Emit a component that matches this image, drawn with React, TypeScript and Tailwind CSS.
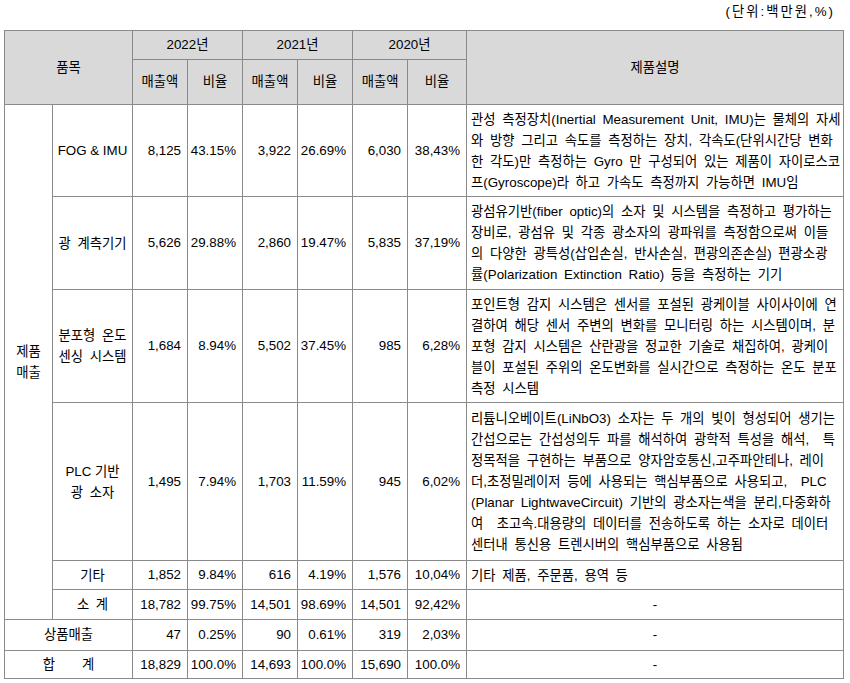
import type { ReactNode } from "react";

type Row = {
  name: ReactNode;
  values: string[];
  desc: string[];
  h: string;
};

const rows: Row[] = [
  {
    name: <span className="[word-spacing:normal]">FOG &amp; IMU</span>,
    values: ["8,125", "43.15%", "3,922", "26.69%", "6,030", "38,43%"],
    desc: [
      "관성 측정장치(Inertial Measurement Unit, IMU)는 물체의 자세",
      "와 방향 그리고 속도를 측정하는 장치, 각속도(단위시간당 변화",
      "한 각도)만 측정하는 Gyro 만 구성되어 있는 제품이 자이로스코",
      "프(Gyroscope)라 하고 가속도 측정까지 가능하면 IMU임",
    ],
    h: "h-[92px]",
  },
  {
    name: "광 계측기기",
    values: ["5,626", "29.88%", "2,860", "19.47%", "5,835", "37,19%"],
    desc: [
      "광섬유기반(fiber optic)의 소자 및 시스템을 측정하고 평가하는",
      "장비로, 광섬유 및 각종 광소자의 광파워를 측정함으로써 이들",
      "의 다양한 광특성(삽입손실, 반사손실, 편광의존손실) 편광소광",
      "률(Polarization Extinction Ratio) 등을 측정하는 기기",
    ],
    h: "h-[93px]",
  },
  {
    name: (
      <>
        분포형 온도
        <br />
        센싱 시스템
      </>
    ),
    values: ["1,684", "8.94%", "5,502", "37.45%", "985", "6,28%"],
    desc: [
      "포인트형 감지 시스템은 센서를 포설된 광케이블 사이사이에 연",
      "결하여 해당 센서 주변의 변화를 모니터링 하는 시스템이며, 분",
      "포형 감지 시스템은 산란광을 정교한 기술로 채집하여, 광케이",
      "블이 포설된 주위의 온도변화를 실시간으로 측정하는 온도 분포",
      "측정 시스템",
    ],
    h: "h-[113px]",
  },
  {
    name: (
      <>
        <span className="[word-spacing:normal]">PLC 기반</span>
        <br />광 소자
      </>
    ),
    values: ["1,495", "7.94%", "1,703", "11.59%", "945", "6,02%"],
    desc: [
      "리튬니오베이트(LiNbO3) 소자는 두 개의 빛이 형성되어 생기는",
      "간섭으로는 간섭성의두 파를 해석하여 광학적 특성을 해석,\u00a0 특",
      "정목적을 구현하는 부품으로 양자암호통신,고주파안테나, 레이",
      "더,초정밀레이저 등에 사용되는 핵심부품으로 사용되고,\u00a0 PLC",
      "(Planar LightwaveCircuit) 기반의 광소자는색을 분리,다중화하",
      "여\u00a0 초고속.대용량의 데이터를 전송하도록 하는 소자로 데이터",
      "센터내 통신용 트렌시버의 핵심부품으로 사용됨",
    ],
    h: "h-[158px]",
  },
  {
    name: "기타",
    values: ["1,852", "9.84%", "616", "4.19%", "1,576", "10,04%"],
    desc: ["기타 제품, 주문품, 용역 등"],
    h: "h-[29px]",
  },
];

const cell = "border border-[#8a8a8a] align-middle";
const head = `${cell} bg-[#d9d9d9] text-center font-normal`;

function Num({ children }: { children: ReactNode }) {
  return <td className={`${cell} pr-[6px] text-right`}>{children}</td>;
}

function Values({ values }: { values: string[] }) {
  return (
    <>
      {values.map((v, i) => (
        <Num key={i}>{v}</Num>
      ))}
    </>
  );
}

function Desc({ lines }: { lines: string[] }) {
  return (
    <td className={`${cell} px-[4px] text-left leading-[21px]`}>
      {lines.map((line, i) => (
        <div key={i} className="whitespace-nowrap">
          {line}
        </div>
      ))}
    </td>
  );
}

function Dash() {
  return <td className={`${cell} text-center`}>-</td>;
}

export default function App() {
  return (
    <div className="min-h-screen bg-white font-['Liberation_Sans','Noto_Sans_CJK_KR',sans-serif] text-[13.33px] text-black [word-spacing:3px]">
      <div className="flex h-[30px] items-center justify-end pr-[15px] pb-[6px] tracking-[2px]">
        (단위:백만원,%)
      </div>
      <table className="ml-[4px] w-[839px] table-fixed border-collapse border border-black">
        <colgroup>
          <col className="w-[48px]" />
          <col className="w-[80px]" />
          <col className="w-[55px]" />
          <col className="w-[55px]" />
          <col className="w-[55px]" />
          <col className="w-[55px]" />
          <col className="w-[55px]" />
          <col className="w-[59px]" />
          <col className="w-[377px]" />
        </colgroup>
        <thead>
          <tr className="h-[29px]">
            <th rowSpan={2} colSpan={2} className={head}>
              품목
            </th>
            <th colSpan={2} className={head}>
              2022년
            </th>
            <th colSpan={2} className={head}>
              2021년
            </th>
            <th colSpan={2} className={head}>
              2020년
            </th>
            <th rowSpan={2} className={head}>
              제품설명
            </th>
          </tr>
          <tr className="h-[45px]">
            {["매출액", "비율", "매출액", "비율", "매출액", "비율"].map((t, i) => (
              <th key={i} className={head}>
                {t}
              </th>
            ))}
          </tr>
        </thead>
        <tbody>
          {rows.map((r, i) => (
            <tr key={i} className={r.h}>
              {i === 0 && (
                <td rowSpan={6} className={`${cell} text-center leading-[21px]`}>
                  제품
                  <br />
                  매출
                </td>
              )}
              <td className={`${cell} text-center leading-[21px]`}>{r.name}</td>
              <Values values={r.values} />
              <Desc lines={r.desc} />
            </tr>
          ))}
          <tr className="h-[30px]">
            <td className={`${cell} text-center`}>소 계</td>
            <Values values={["18,782", "99.75%", "14,501", "98.69%", "14,501", "92,42%"]} />
            <Dash />
          </tr>
          <tr className="h-[31px]">
            <td colSpan={2} className={`${cell} text-center`}>
              상품매출
            </td>
            <Values values={["47", "0.25%", "90", "0.61%", "319", "2,03%"]} />
            <Dash />
          </tr>
          <tr className="h-[28px]">
            <td colSpan={2} className={`${cell} text-center`}>
              <span>합</span>
              <span className="ml-[27px]">계</span>
            </td>
            <Values values={["18,829", "100.0%", "14,693", "100.0%", "15,690", "100.0%"]} />
            <Dash />
          </tr>
        </tbody>
      </table>
    </div>
  );
}
